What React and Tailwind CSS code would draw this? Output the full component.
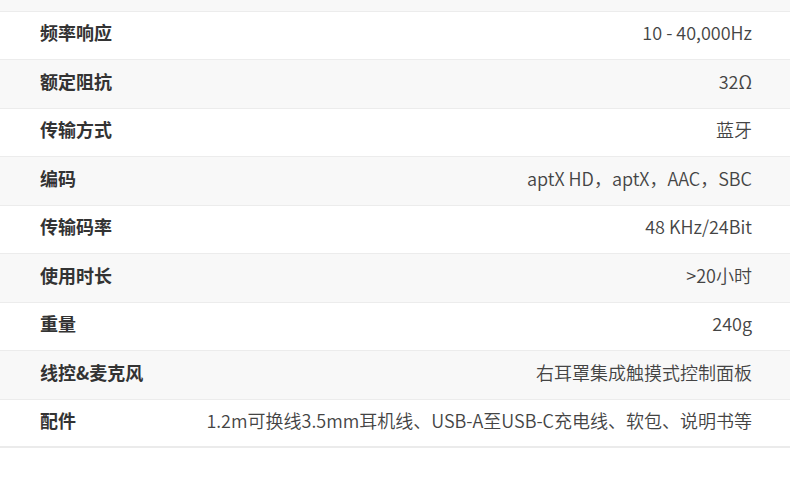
import React from 'react'

const specs = [
  ['频率响应', '10 - 40,000Hz'],
  ['额定阻抗', '32Ω'],
  ['传输方式', '蓝牙'],
  ['编码', 'aptX HD，aptX，AAC，SBC'],
  ['传输码率', '48 KHz/24Bit'],
  ['使用时长', '>20小时'],
  ['重量', '240g'],
  ['线控&麦克风', '右耳罩集成触摸式控制面板'],
  ['配件', '1.2m可换线3.5mm耳机线、USB-A至USB-C充电线、软包、说明书等'],
]

export default function App() {
  return (
    <div
      className="w-[790px] h-[500px] bg-white overflow-hidden"
      style={{ fontFamily: '"Noto Sans CJK SC", "Noto Sans", sans-serif' }}
    >
      <div className="h-3 bg-[#f8f8f8] border-b border-[#ececec]" />
      {specs.map(([label, value], i) => {
        const last = i === specs.length - 1
        return (
          <div
            key={label}
            className={`flex items-center justify-between pl-10 pr-[38px] pb-1.5 ${
              i % 2 === 0 ? 'h-12 bg-white' : 'h-[49px] bg-[#f8f8f8]'
            } ${last ? 'border-b-2 border-[#ebebeb]' : 'border-b border-[#ececec]'}`}
          >
            <span className="text-[18px] font-bold text-[#333]">{label}</span>
            <span className="text-[18px] font-[350] text-[#444]">{value}</span>
          </div>
        )
      })}
    </div>
  )
}
